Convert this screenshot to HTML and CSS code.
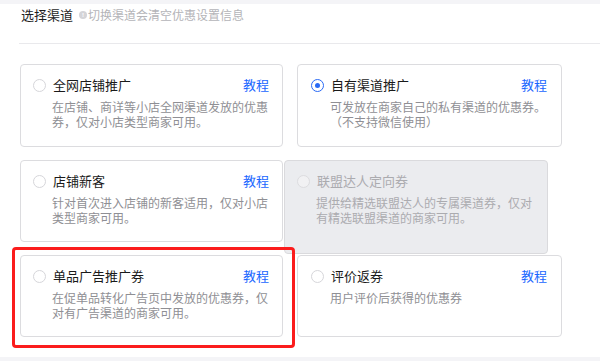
FILE: index.html
```html
<!DOCTYPE html>
<html lang="zh-CN">
<head>
<meta charset="utf-8">
<title>选择渠道</title>
<link rel="stylesheet" href="styles.css">
</head>
<body>
<div class="panel">
  <div class="header">
    <span class="title">选择渠道</span>
    <span class="info-icon">!</span>
    <span class="hint">切换渠道会清空优惠设置信息</span>
  </div>
  <div class="grid">
    <div class="card">
      <div class="card-head">
        <span class="radio"></span>
        <span class="card-title">全网店铺推广</span>
        <a class="link">教程</a>
      </div>
      <div class="desc">在店铺、商详等小店全网渠道发放的优惠<br>券，仅对小店类型商家可用。</div>
    </div>
    <div class="card card-right">
      <div class="card-head">
        <span class="radio checked"></span>
        <span class="card-title">自有渠道推广</span>
        <a class="link">教程</a>
      </div>
      <div class="desc">可发放在商家自己的私有渠道的优惠券。<br>（不支持微信使用）</div>
    </div>
    <div class="card">
      <div class="card-head">
        <span class="radio"></span>
        <span class="card-title">店铺新客</span>
        <a class="link">教程</a>
      </div>
      <div class="desc">针对首次进入店铺的新客适用，仅对小店<br>类型商家可用。</div>
    </div>
    <div class="card card-disabled">
      <div class="card-head">
        <span class="radio"></span>
        <span class="card-title">联盟达人定向券</span>
      </div>
      <div class="desc">提供给精选联盟达人的专属渠道券，仅对<br>有精选联盟渠道的商家可用。</div>
    </div>
    <div class="card card-marked">
      <div class="card-head">
        <span class="radio"></span>
        <span class="card-title">单品广告推广券</span>
        <a class="link">教程</a>
      </div>
      <div class="desc">在促单品转化广告页中发放的优惠券，仅<br>对有广告渠道的商家可用。</div>
    </div>
    <div class="card card-right">
      <div class="card-head">
        <span class="radio"></span>
        <span class="card-title">评价返券</span>
        <a class="link">教程</a>
      </div>
      <div class="desc">用户评价后获得的优惠券</div>
    </div>
  </div>
</div>
</body>
</html>
```
FILE: styles.css
```css
* { box-sizing: border-box; }
html, body {
  margin: 0;
  padding: 0;
}
body {
  width: 600px;
  height: 361px;
  overflow: hidden;
  background: #f4f4f7;
  font-family: "Noto Sans CJK SC", "Noto Sans", "Liberation Sans", sans-serif;
  color: #222;
}
.panel {
  margin-top: 4px;
  height: 353px;
  background: #fff;
}
.header {
  margin-left: 19px;
  height: 40px;
  padding: 2px 0 0 2px;
  border-bottom: 1px solid #e9e9ec;
  display: flex;
  align-items: center;
  align-self: flex-start;
  height: 40px;
}
.header {
  align-items: flex-start;
}
.title {
  font-size: 13px;
  line-height: 18px;
  color: #1f1f1f;
}
.info-icon {
  width: 8px;
  height: 8px;
  margin: 5px 1px 0 6px;
  border-radius: 50%;
  background: #d4d4d8;
  color: #fff;
  font-size: 6px;
  line-height: 8px;
  text-align: center;
  font-weight: bold;
  font-family: "Liberation Sans", sans-serif;
}
.hint {
  font-size: 12px;
  line-height: 18px;
  color: #b4b4b8;
}
.grid {
  margin: 20px 0 0 20px;
  display: grid;
  grid-template-columns: 263px 265px;
  grid-template-rows: 83px 82px 82px;
  column-gap: 14px;
  row-gap: 13px;
}
.card {
  position: relative;
  border: 1px solid #dcdcdf;
  border-radius: 4px;
  background: #fff;
  padding: 11px 13px 0 12px;
}
.card-right {
  padding-left: 13px;
  padding-right: 14px;
}
.card-head {
  display: flex;
  align-items: center;
  height: 18px;
}
.radio {
  width: 13px;
  height: 13px;
  border: 1px solid #d6d6da;
  border-radius: 50%;
  background: #fff;
  flex: none;
  margin-right: 7px;
  position: relative;
}
.radio.checked {
  border: 1.5px solid #2a6af5;
}
.radio.checked::after {
  content: "";
  position: absolute;
  left: 50%;
  top: 50%;
  width: 5px;
  height: 5px;
  margin: -2.5px 0 0 -2.5px;
  border-radius: 50%;
  background: #2a6af5;
}
.card-title {
  font-size: 13px;
  line-height: 18px;
  color: #1a1a1a;
  flex: 1;
}
.link {
  font-size: 13px;
  line-height: 18px;
  color: #1966ff;
  cursor: pointer;
}
.desc {
  margin: 5px 0 0 19px;
  font-size: 12px;
  line-height: 15px;
  color: #8f8f94;
  white-space: nowrap;
}
.card-disabled {
  background: #ebecef;
  border-color: #dadadd;
  margin: 0 14px -12px -13px;
  padding-left: 12px;
}
.card-disabled .radio {
  background: #f1f1f3;
  border-color: #dcdcdf;
}
.card-disabled .card-title,
.card-disabled .desc {
  color: #ababaf;
}
.card-marked::after {
  content: "";
  position: absolute;
  left: -9px;
  right: -13px;
  top: -9px;
  bottom: -12px;
  border: 3px solid #fb1c1c;
  border-radius: 4px;
  pointer-events: none;
}
```
